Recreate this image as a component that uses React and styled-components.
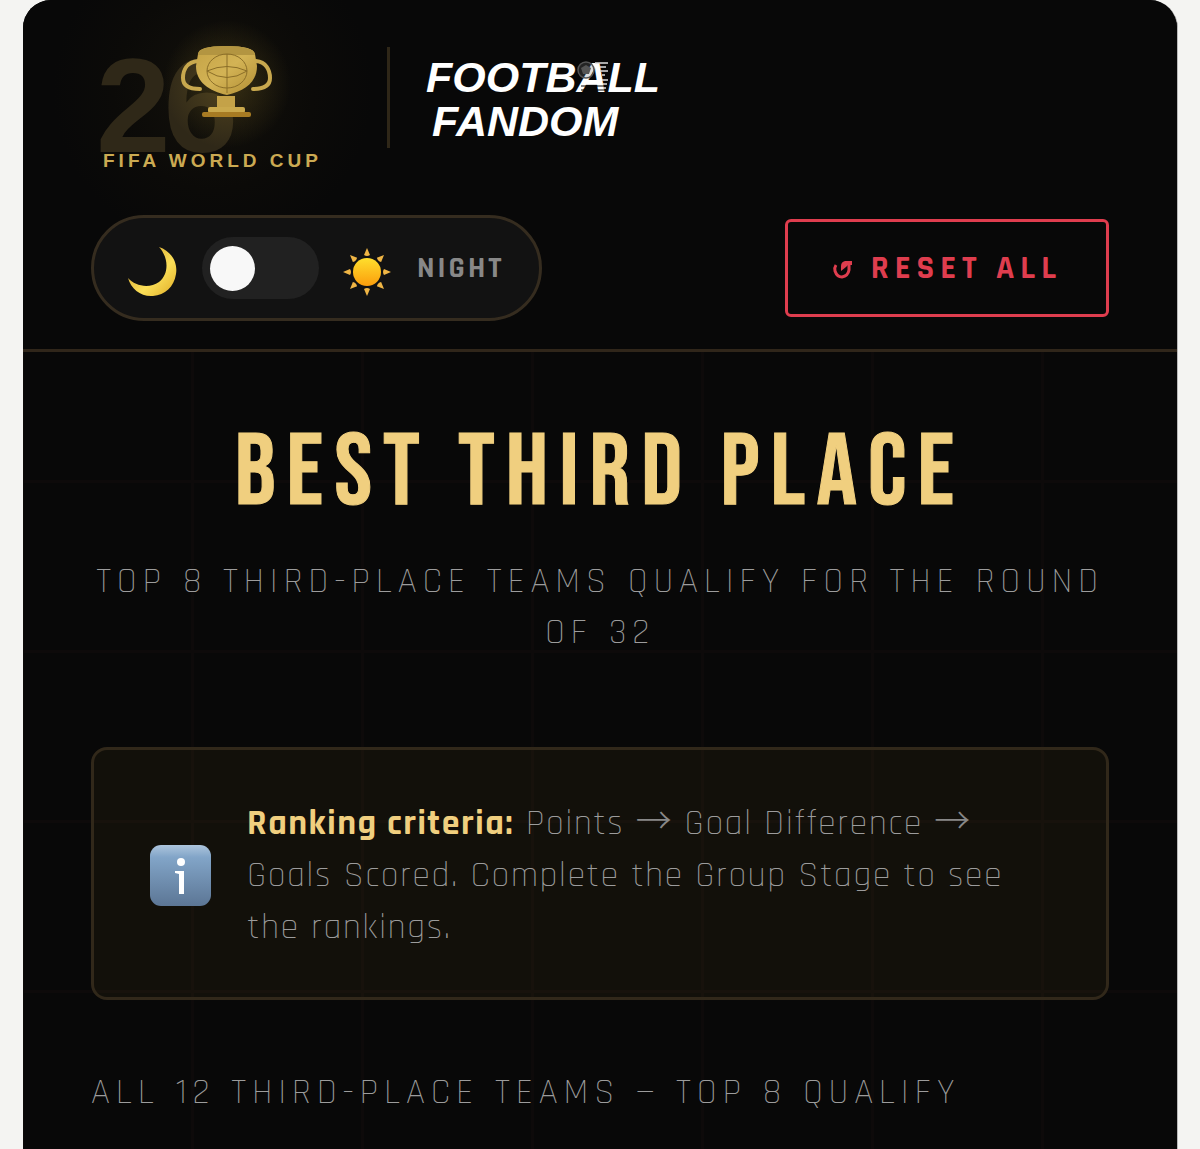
import React, { useState } from "react";
import styled, { createGlobalStyle } from "styled-components";

const GlobalStyle = createGlobalStyle`
  *, *::before, *::after { box-sizing: border-box; }
  body {
    margin: 0;
    background: #f4f4f2;
    font-family: Rajdhani, Roboto, "Liberation Sans", sans-serif;
  }
`;

const Screen = styled.div`
  display: flex;
  flex-direction: column;
  min-height: 100vh;
  margin: 0 22px 0 23px;
  border-right: 1px solid #b9b9b9;
  border-radius: 28px 28px 0 0;
  overflow: hidden;
  background: #080808;
  color: #9c9c9c;
`;

const Header = styled.header`
  display: flex;
  flex-direction: column;
  gap: 37px;
  padding: 24px 68px 28px;
  border-bottom: 3px solid #30261a;
  background: radial-gradient(circle at 190px 90px, #13110b 0, #0b0a08 100px, #080808 160px);
`;

const Brand = styled.div`
  display: flex;
  align-items: flex-start;
`;

const Divider = styled.span`
  width: 3px;
  height: 101px;
  margin: 23px 37px 0 58px;
  background: #2f2718;
`;

const CupMark = styled.svg`
  overflow: visible;
`;

const Wordmark = styled.svg`
  margin-top: 28px;
  overflow: visible;
`;

const Controls = styled.div`
  display: flex;
  align-items: center;
  justify-content: space-between;
`;

const ThemePill = styled.label`
  display: flex;
  align-items: center;
  gap: 24px;
  height: 106px;
  padding: 0 35px 0 33px;
  border: 3px solid #352c1f;
  border-radius: 53px;
  background: #121212;
  cursor: pointer;
`;

const Switch = styled.input`
  appearance: none;
  display: flex;
  align-items: center;
  width: 117px;
  height: 62px;
  margin: 0;
  padding: 0 8px;
  border-radius: 31px;
  background: #212121;
  cursor: pointer;

  &::before {
    content: "";
    width: 45px;
    height: 45px;
    border-radius: 50%;
    background: #f8f8f8;
  }

  &:checked {
    justify-content: flex-end;
  }
`;

const ModeName = styled.span`
  padding-left: 2px;
  color: #888;
  font-size: 30px;
  line-height: 36px;
  font-weight: 700;
  letter-spacing: 3px;
`;

const ResetButton = styled.button`
  display: flex;
  align-items: center;
  gap: 18px;
  height: 98px;
  padding: 0 44px;
  border: 3px solid #df3d4e;
  border-radius: 6px;
  background: transparent;
  color: #df3d4e;
  font-family: inherit;
  font-size: 33px;
  font-weight: 700;
  letter-spacing: 6px;
  cursor: pointer;
`;

const Main = styled.main`
  flex: 1;
  padding: 72px 68px 24px;
  background-image:
    linear-gradient(to left, #0d0a0a 3px, transparent 3px),
    linear-gradient(to top, #0d0a0a 3px, transparent 3px);
  background-size: 170px 170px;
  background-position: 1px -39px;
`;

const Title = styled.h1`
  margin: 0;
  color: #f0cf7f;
  font-family: "Bebas Neue", "Roboto Condensed", Roboto, sans-serif;
  font-size: 101px;
  line-height: 100px;
  font-weight: 400;
  letter-spacing: 11px;
  text-align: center;
  -webkit-text-stroke: 1px #f0cf7f;
`;

const Subtitle = styled.p`
  margin: 32px 0 89px;
  font-size: 36px;
  line-height: 51px;
  font-weight: 300;
  letter-spacing: 0.16em;
  text-align: center;
`;

const Notice = styled.section`
  display: flex;
  align-items: center;
  gap: 35px;
  padding: 48px 56px 43px;
  border: 3px solid #31281a;
  border-radius: 16px;
  background: rgba(212, 175, 55, 0.05);
`;

const NoticeText = styled.p`
  flex: 1;
  margin: 0;
  font-size: 36px;
  line-height: 52px;
  font-weight: 300;
  letter-spacing: 0.04em;
`;

const Arrow = styled.span`
  color: #888;
  font-family: "Noto Sans CJK JP", Inter, sans-serif;
  line-height: 1;
`;

const Strong = styled.strong`
  color: #f0cf7f;
  font-weight: 700;
`;

const SectionTitle = styled.h2`
  margin: 67px 0 0;
  font-size: 36px;
  line-height: 51px;
  font-weight: 300;
  letter-spacing: 0.16em;
`;

function CupLogo() {
  return (
    <CupMark width="238" height="154" viewBox="91 24 238 154" role="img" aria-label="FIFA World Cup 26">
      <defs>
        <linearGradient id="gold" x1="0" y1="0" x2="1" y2="1">
          <stop offset="0" stopColor="#c4a245" />
          <stop offset="0.5" stopColor="#d3b355" />
          <stop offset="1" stopColor="#b08d33" />
        </linearGradient>
        <radialGradient id="glow">
          <stop offset="0" stopColor="#d4af37" stopOpacity="0.2" />
          <stop offset="1" stopColor="#d4af37" stopOpacity="0" />
        </radialGradient>
      </defs>
      <text x="96" y="152" fontFamily="Liberation Sans, sans-serif" fontSize="134" fontWeight="700" letterSpacing="-7" fill="#2f2818">26</text>
      <circle cx="227" cy="84" r="64" fill="url(#glow)" />
      <g fill="none" stroke="#c8a84e" strokeWidth="4" strokeLinecap="round">
        <path d="M198 61C187 62 183 70 183 78C183 86 189 89 200 89" />
        <path d="M256 61C266 62 270 70 270 78C270 86 264 89 253 89" />
      </g>
      <path d="M198 54Q198 46 226 46Q254 46 255 54L257 66C257 82 245 91 227 95C209 91 196 82 196 66Z" fill="url(#gold)" />
      <path d="M198 55Q198 46 226 46Q254 46 255 55Z" fill="#b39541" />
      <g fill="none" stroke="#8b6e28" strokeWidth="1">
        <ellipse cx="227" cy="71" rx="20" ry="17" />
        <path d="M227 54V93M207 71Q227 62 247 71Q227 84 207 71" />
      </g>
      <rect x="217" y="96" width="18" height="12" fill="#c4a248" />
      <rect x="208" y="107" width="37" height="6" rx="2" fill="#caa94d" />
      <rect x="202" y="112" width="49" height="5" rx="2" fill="#a77b23" />
      <text x="103" y="167" fontFamily="Liberation Sans, sans-serif" fontSize="19" fontWeight="700" letterSpacing="4" fill="#cbaa52">FIFA WORLD CUP</text>
    </CupMark>
  );
}

function FandomLogo() {
  return (
    <Wordmark width="234" height="90" viewBox="428 52 234 90" role="img" aria-label="Football Fandom">
      <g fontFamily="Liberation Sans, sans-serif" fontSize="43" fontWeight="700" fontStyle="italic" fill="#fff">
        <text x="427" y="92">FOOTBALL</text>
        <text x="433" y="136">FANDOM</text>
      </g>
      <path d="M582 86H607M582 90H607" stroke="#080808" strokeWidth="1" />
      <path d="M596 63H609M601 67H607M601 71H609M603 75H606M603 80H609M604 84H608M604 88H607" stroke="#ddd" strokeWidth="1.5" />
      <circle cx="587" cy="70" r="8" fill="#777" fillOpacity="0.25" stroke="#555" strokeWidth="1.5" />
      <path d="M587 65L592 68L590 74H584L582 68Z" fill="#555" />
    </Wordmark>
  );
}

function MoonIcon() {
  return (
    <svg width="51" height="62" viewBox="127 237 51 62" aria-hidden="true">
      <defs>
        <linearGradient id="moon" x1="0" y1="0" x2="1" y2="1">
          <stop offset="0" stopColor="#c99221" />
          <stop offset="0.6" stopColor="#fbdf58" />
          <stop offset="1" stopColor="#dfab25" />
        </linearGradient>
      </defs>
      <path d="M159 247C171 251 178 262 176 274C174 287 165 295 153 296C141 297 131 289 128 278C135 286 149 289 159 282C169 274 169 258 159 247Z" fill="url(#moon)" />
    </svg>
  );
}

function SunIcon() {
  const rays = [0, 45, 90, 135, 180, 225, 270, 315];
  return (
    <svg width="48" height="62" viewBox="343 237 48 62" aria-hidden="true">
      <defs>
        <linearGradient id="sun" x1="0" y1="0" x2="0" y2="1">
          <stop offset="0" stopColor="#ffdf2d" />
          <stop offset="1" stopColor="#fb9d0c" />
        </linearGradient>
      </defs>
      {rays.map((angle) => (
        <path key={angle} d="M367 248L370 255Q367 257 364 255Z" fill="#efb545" transform={`rotate(${angle} 367 272)`} />
      ))}
      <circle cx="367" cy="272" r="14" fill="url(#sun)" />
    </svg>
  );
}

function ResetIcon() {
  return (
    <svg width="21" height="22" viewBox="0 0 21 22" fill="none" stroke="currentColor" aria-hidden="true">
      <path d="M4 8Q2 11 3 14Q5 20 10 20Q16 19 17 13V8" strokeWidth="3" />
      <path d="M20 4H13Q9 5 9 9V14L14 10L16 8H20Z" fill="currentColor" stroke="none" />
    </svg>
  );
}

function InfoIcon() {
  return (
    <svg width="62" height="62" viewBox="0 0 62 62" role="img" aria-label="Information">
      <defs>
        <linearGradient id="tile" x1="0" y1="0" x2="0" y2="1">
          <stop offset="0" stopColor="#adc5dd" />
          <stop offset="0.2" stopColor="#82a5c8" />
          <stop offset="1" stopColor="#5c7695" />
        </linearGradient>
      </defs>
      <rect x="0" y="0" width="61" height="61" rx="11" fill="url(#tile)" />
      <circle cx="31" cy="17" r="4" fill="#fff" />
      <path d="M25 26H34V49H29V29L25 28Z" fill="#fff" />
    </svg>
  );
}

export default function App() {
  const [isDay, setIsDay] = useState(false);
  return (
    <>
      <GlobalStyle />
      <Screen>
        <Header>
          <Brand>
            <CupLogo />
            <Divider />
            <FandomLogo />
          </Brand>
          <Controls>
            <ThemePill>
              <MoonIcon />
              <Switch type="checkbox" checked={isDay} onChange={(e) => setIsDay(e.target.checked)} />
              <SunIcon />
              <ModeName>{isDay ? "DAY" : "NIGHT"}</ModeName>
            </ThemePill>
            <ResetButton type="button" onClick={() => setIsDay(false)}>
              <ResetIcon />
              RESET ALL
            </ResetButton>
          </Controls>
        </Header>
        <Main>
          <Title>BEST THIRD PLACE</Title>
          <Subtitle>TOP 8 THIRD-PLACE TEAMS QUALIFY FOR THE ROUND OF 32</Subtitle>
          <Notice>
            <InfoIcon />
            <NoticeText>
              <Strong>Ranking criteria:</Strong> Points <Arrow>→</Arrow> Goal Difference <Arrow>→</Arrow> Goals Scored. Complete the Group Stage to see the rankings.
            </NoticeText>
          </Notice>
          <SectionTitle>ALL 12 THIRD-PLACE TEAMS — TOP 8 QUALIFY</SectionTitle>
        </Main>
      </Screen>
    </>
  );
}
